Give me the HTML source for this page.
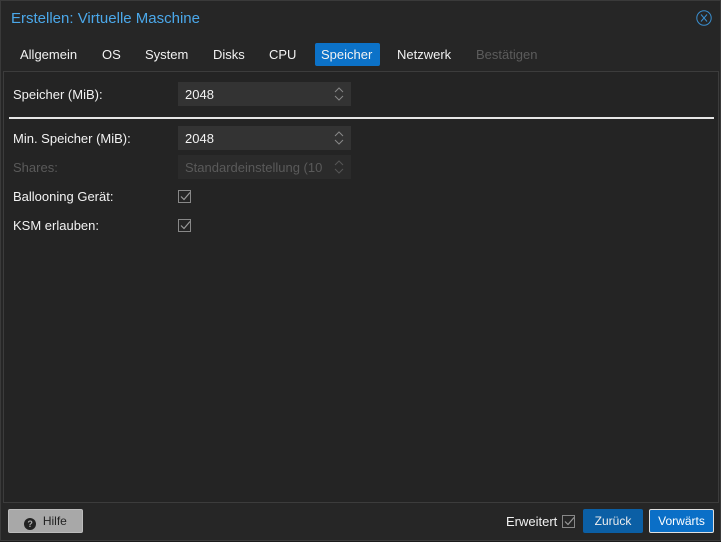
<!DOCTYPE html>
<html><head><style>
*{box-sizing:border-box;margin:0;padding:0}
body{width:721px;height:542px;background:#1b1b1b;font-family:"Liberation Sans",sans-serif;font-size:13px;color:#f2f2f2;position:relative;overflow:hidden}
.win{position:absolute;left:0;top:0;width:721px;height:541px;background:#262626;border:1px solid #3a3a3a}
.title{position:absolute;left:10px;top:9px;font-size:15px;color:#4ba8ea}
.close{position:absolute;left:695px;top:9px}
.tab{position:absolute;top:42px;height:23px;line-height:23px;padding:0 7px;font-size:13px}
.tab.a{background:#0c72c8;border-radius:2px}
.panel{position:absolute;left:3px;top:71px;width:716px;height:432px;background:#242424;border:1px solid #3c3c3c}
.lbl{position:absolute;left:13px;font-size:13px}
.inp{position:absolute;left:178px;width:173px;height:24px;background:#333;padding-left:7px;line-height:26px;font-size:13px}
.inp.d{background:#2b2b2b;color:#5a5a5a}
.sp{position:absolute;right:7px;top:4px}
.cb{position:absolute;left:178px;width:13px;height:13px;border:1px solid #888}
.cb svg{position:absolute;left:0;top:-1px}
.foot{position:absolute;left:3px;top:503px;width:716px;height:37px;background:#262626}
.btn{position:absolute;height:24px;line-height:22px;font-size:12px;text-align:center;border-radius:2px}
</style></head><body>
<div class="win">
<div class="title">Erstellen: Virtuelle Maschine</div>
<svg class="close" width="16" height="16"><circle cx="8" cy="8" r="7.2" stroke="#3a8fd0" fill="none" stroke-width="1"/><path d="M5 4.5l6 7M11 4.5l-6 7" stroke="#3a8fd0" stroke-width="1"/></svg>
<div class="tab" style="left:12px">Allgemein</div>
<div class="tab" style="left:94px">OS</div>
<div class="tab" style="left:137px">System</div>
<div class="tab" style="left:205px">Disks</div>
<div class="tab" style="left:261px">CPU</div>
<div class="tab a" style="left:314px;width:65px;padding:0 6px">Speicher</div>
<div class="tab" style="left:389px">Netzwerk</div>
<div class="tab" style="left:468px;color:#5c5c5c">Bestätigen</div>
</div>
<div class="panel"></div>
<div class="lbl" style="top:87px">Speicher (MiB):</div>
<div class="inp" style="top:82px">2048<svg class="sp" width="10" height="16"><path d="M1 6l4-4 4 4M1 10l4 4 4-4" stroke="#888" fill="none"/></svg></div>
<div style="position:absolute;left:9px;top:117px;width:705px;height:2px;background:#e6e6e6"></div>
<div class="lbl" style="top:131px">Min. Speicher (MiB):</div>
<div class="inp" style="top:126px">2048<svg class="sp" width="10" height="16"><path d="M1 6l4-4 4 4M1 10l4 4 4-4" stroke="#888" fill="none"/></svg></div>
<div class="lbl" style="top:160px;color:#5a5a5a">Shares:</div>
<div class="inp d" style="top:155px">Standardeinstellung (10<svg class="sp" width="10" height="16"><path d="M1 6l4-4 4 4M1 10l4 4 4-4" stroke="#555" fill="none"/></svg></div>
<div class="lbl" style="top:189px">Ballooning Gerät:</div>
<div class="cb" style="top:190px"><svg width="13" height="13"><path d="M2 6.5l3 3 6-7" stroke="#999" fill="none" stroke-width="1.2"/></svg></div>
<div class="lbl" style="top:218px">KSM erlauben:</div>
<div class="cb" style="top:219px"><svg width="13" height="13"><path d="M2 6.5l3 3 6-7" stroke="#999" fill="none" stroke-width="1.2"/></svg></div>
<div class="foot"></div>
<div class="btn" style="left:8px;top:509px;width:75px;background:#a8a8a8;border:1px solid #bbb;color:#222;line-height:22px"><span style="display:inline-block;width:12px;height:12px;border-radius:50%;background:#222;color:#aaa;font-size:9px;line-height:12px;font-weight:bold;vertical-align:-2px">?</span>&nbsp; Hilfe</div>
<div style="position:absolute;left:506px;top:514px;font-size:13px">Erweitert</div>
<div class="cb" style="left:562px;top:515px"><svg width="13" height="13"><path d="M2 6.5l3 3 6-7" stroke="#999" fill="none" stroke-width="1.2"/></svg></div>
<div class="btn" style="left:583px;top:509px;width:60px;background:#0b5fa5;color:#eee;height:24px;line-height:24px">Zurück</div>
<div class="btn" style="left:649px;top:509px;width:65px;background:#0a6fc7;border:1px solid #e0e0e0;color:#fff">Vorwärts</div>
</body></html>
